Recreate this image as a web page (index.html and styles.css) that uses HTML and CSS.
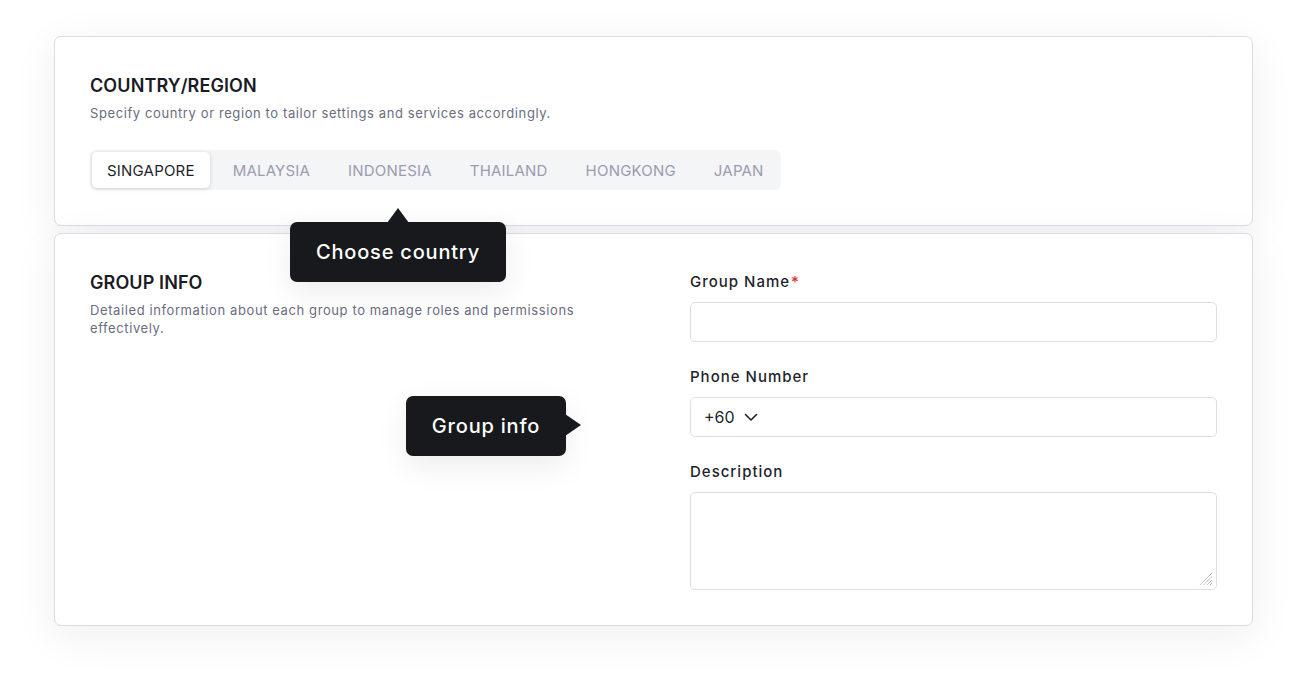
FILE: index.html
```html
<!DOCTYPE html>
<html lang="en">
<head>
<meta charset="utf-8">
<title>Group settings</title>
<link rel="stylesheet" href="styles.css">
</head>
<body>
<div class="page">
  <section class="card card-country">
    <h2 class="card-title">COUNTRY/REGION</h2>
    <p class="card-desc">Specify country or region to tailor settings and services accordingly.</p>
    <div class="tabs">
      <button class="tab active">SINGAPORE</button>
      <button class="tab">MALAYSIA</button>
      <button class="tab">INDONESIA</button>
      <button class="tab">THAILAND</button>
      <button class="tab">HONGKONG</button>
      <button class="tab">JAPAN</button>
    </div>
  </section>

  <section class="card card-group">
    <div class="group-intro">
      <h2 class="card-title">GROUP INFO</h2>
      <p class="card-desc group-desc">Detailed information about each group to manage roles and permissions effectively.</p>
    </div>
    <div class="group-form">
      <div class="field">
        <label class="label">Group Name<span class="req">*</span></label>
        <input class="input" type="text">
      </div>
      <div class="field">
        <label class="label">Phone Number</label>
        <div class="input phone">
          <span class="code">+60</span>
          <svg class="chev" width="14" height="9" viewBox="0 0 14 9"><path d="M1.5 1.5 L7 7 L12.5 1.5" fill="none" stroke="#1e1f2b" stroke-width="1.6" stroke-linecap="round" stroke-linejoin="round"/></svg>
        </div>
      </div>
      <div class="field">
        <label class="label">Description</label>
        <div class="textarea-wrap">
          <textarea class="textarea"></textarea>
          <svg class="grip" width="14" height="14" viewBox="0 0 14 14"><path d="M13 1 L1 13 M13 4.5 L4.5 13 M13 8 L8 13 M13 11 L11 13" stroke="#7d8095" stroke-width="0.9" stroke-dasharray="1 0.7" fill="none"/></svg>
        </div>
      </div>
    </div>
  </section>

  <div class="tooltip tip-country">Choose country</div>
  <div class="tooltip tip-group">Group info</div>
</div>
</body>
</html>
```

FILE: styles.css
```css
* { box-sizing: border-box; }
html, body { margin: 0; padding: 0; background: #ffffff; }
body {
  font-family: "Inter", "Noto Sans", sans-serif;
  color: #1c1d27;
}
.page {
  position: relative;
  width: 1308px;
  height: 699px;
  padding: 36px 55px 0 54px;
  display: flex;
  flex-direction: column;
  gap: 7px;
}
.card {
  background: #fff;
  border: 1px solid #d9dce4;
  border-radius: 7px;
  box-shadow: 0 10px 44px rgba(30, 35, 50, 0.07);
  padding: 35px;
}
.card-title {
  margin: 0;
  font-size: 18px;
  line-height: 28px;
  font-weight: 600;
  color: #1a1b24;
  letter-spacing: 0.1px;
}
.card-desc {
  margin: 4px 0 0;
  font-size: 13px;
  line-height: 18px;
  color: #6a6d80;
  letter-spacing: 0.6px;
}
.tabs {
  margin-top: 28px;
  display: flex;
  width: max-content;
  gap: 8px;
  padding: 2px;
  background: #f4f5f7;
  border-radius: 6px;
}
.tab {
  height: 36px;
  padding: 0 15px;
  border: 0;
  background: transparent;
  font-family: "Inter", sans-serif;
  font-size: 15px;
  font-weight: 400;
  color: #9a9cb0;
  border-radius: 5px;
  letter-spacing: 0.2px;
}
.tab.active {
  background: #fff;
  color: #1e1f2b;
  box-shadow: 0 1px 4px rgba(20, 25, 40, 0.16);
}
.card-group {
  display: grid;
  grid-template-columns: 564px 1fr;
  column-gap: 36px;
}
.group-desc { max-width: 520px; }
.field { display: flex; flex-direction: column; }
.field + .field { margin-top: 22px; }
.label {
  font-size: 15px;
  line-height: 24px;
  font-weight: 500;
  color: #1e1f2b;
  margin: 1px 0 8px;
  letter-spacing: 1px;
}
.req { color: #e0302a; margin-left: 1px; }
.input {
  height: 40px;
  border: 1px solid #dcdde7;
  border-radius: 5px;
  background: #fff;
  font-family: "Inter", sans-serif;
  font-size: 15px;
  outline: none;
}
.phone {
  display: flex;
  align-items: center;
  padding: 0 13px;
  gap: 9px;
  color: #1e1f2b;
}
.code { font-size: 16px; }
.chev { margin-top: 1px; }
.textarea-wrap { position: relative; height: 98px; }
.textarea {
  display: block;
  width: 100%;
  height: 98px;
  border: 1px solid #dcdde7;
  border-radius: 5px;
  resize: none;
  outline: none;
}
.grip { position: absolute; right: 4px; bottom: 4px; }
.tooltip {
  position: absolute;
  background: #18191c;
  color: #fff;
  font-size: 20px;
  line-height: 24px;
  font-weight: 500;
  padding: 18px 0;
  border-radius: 7px;
  box-shadow: 0 10px 30px rgba(0, 0, 0, 0.08);
  letter-spacing: 0.8px;
  white-space: nowrap;
  text-align: center;
}
.tooltip::after {
  content: "";
  position: absolute;
  width: 0; height: 0;
}
.tip-country { left: 290px; top: 222px; width: 216px; }
.tip-country::after {
  left: 97px; top: -14px;
  border-left: 11px solid transparent;
  border-right: 11px solid transparent;
  border-bottom: 15px solid #18191c;
}
.tip-group { left: 406px; top: 396px; width: 160px; }
.tip-group::after {
  right: -15px; top: 18px;
  border-top: 11px solid transparent;
  border-bottom: 11px solid transparent;
  border-left: 16px solid #18191c;
}
```
